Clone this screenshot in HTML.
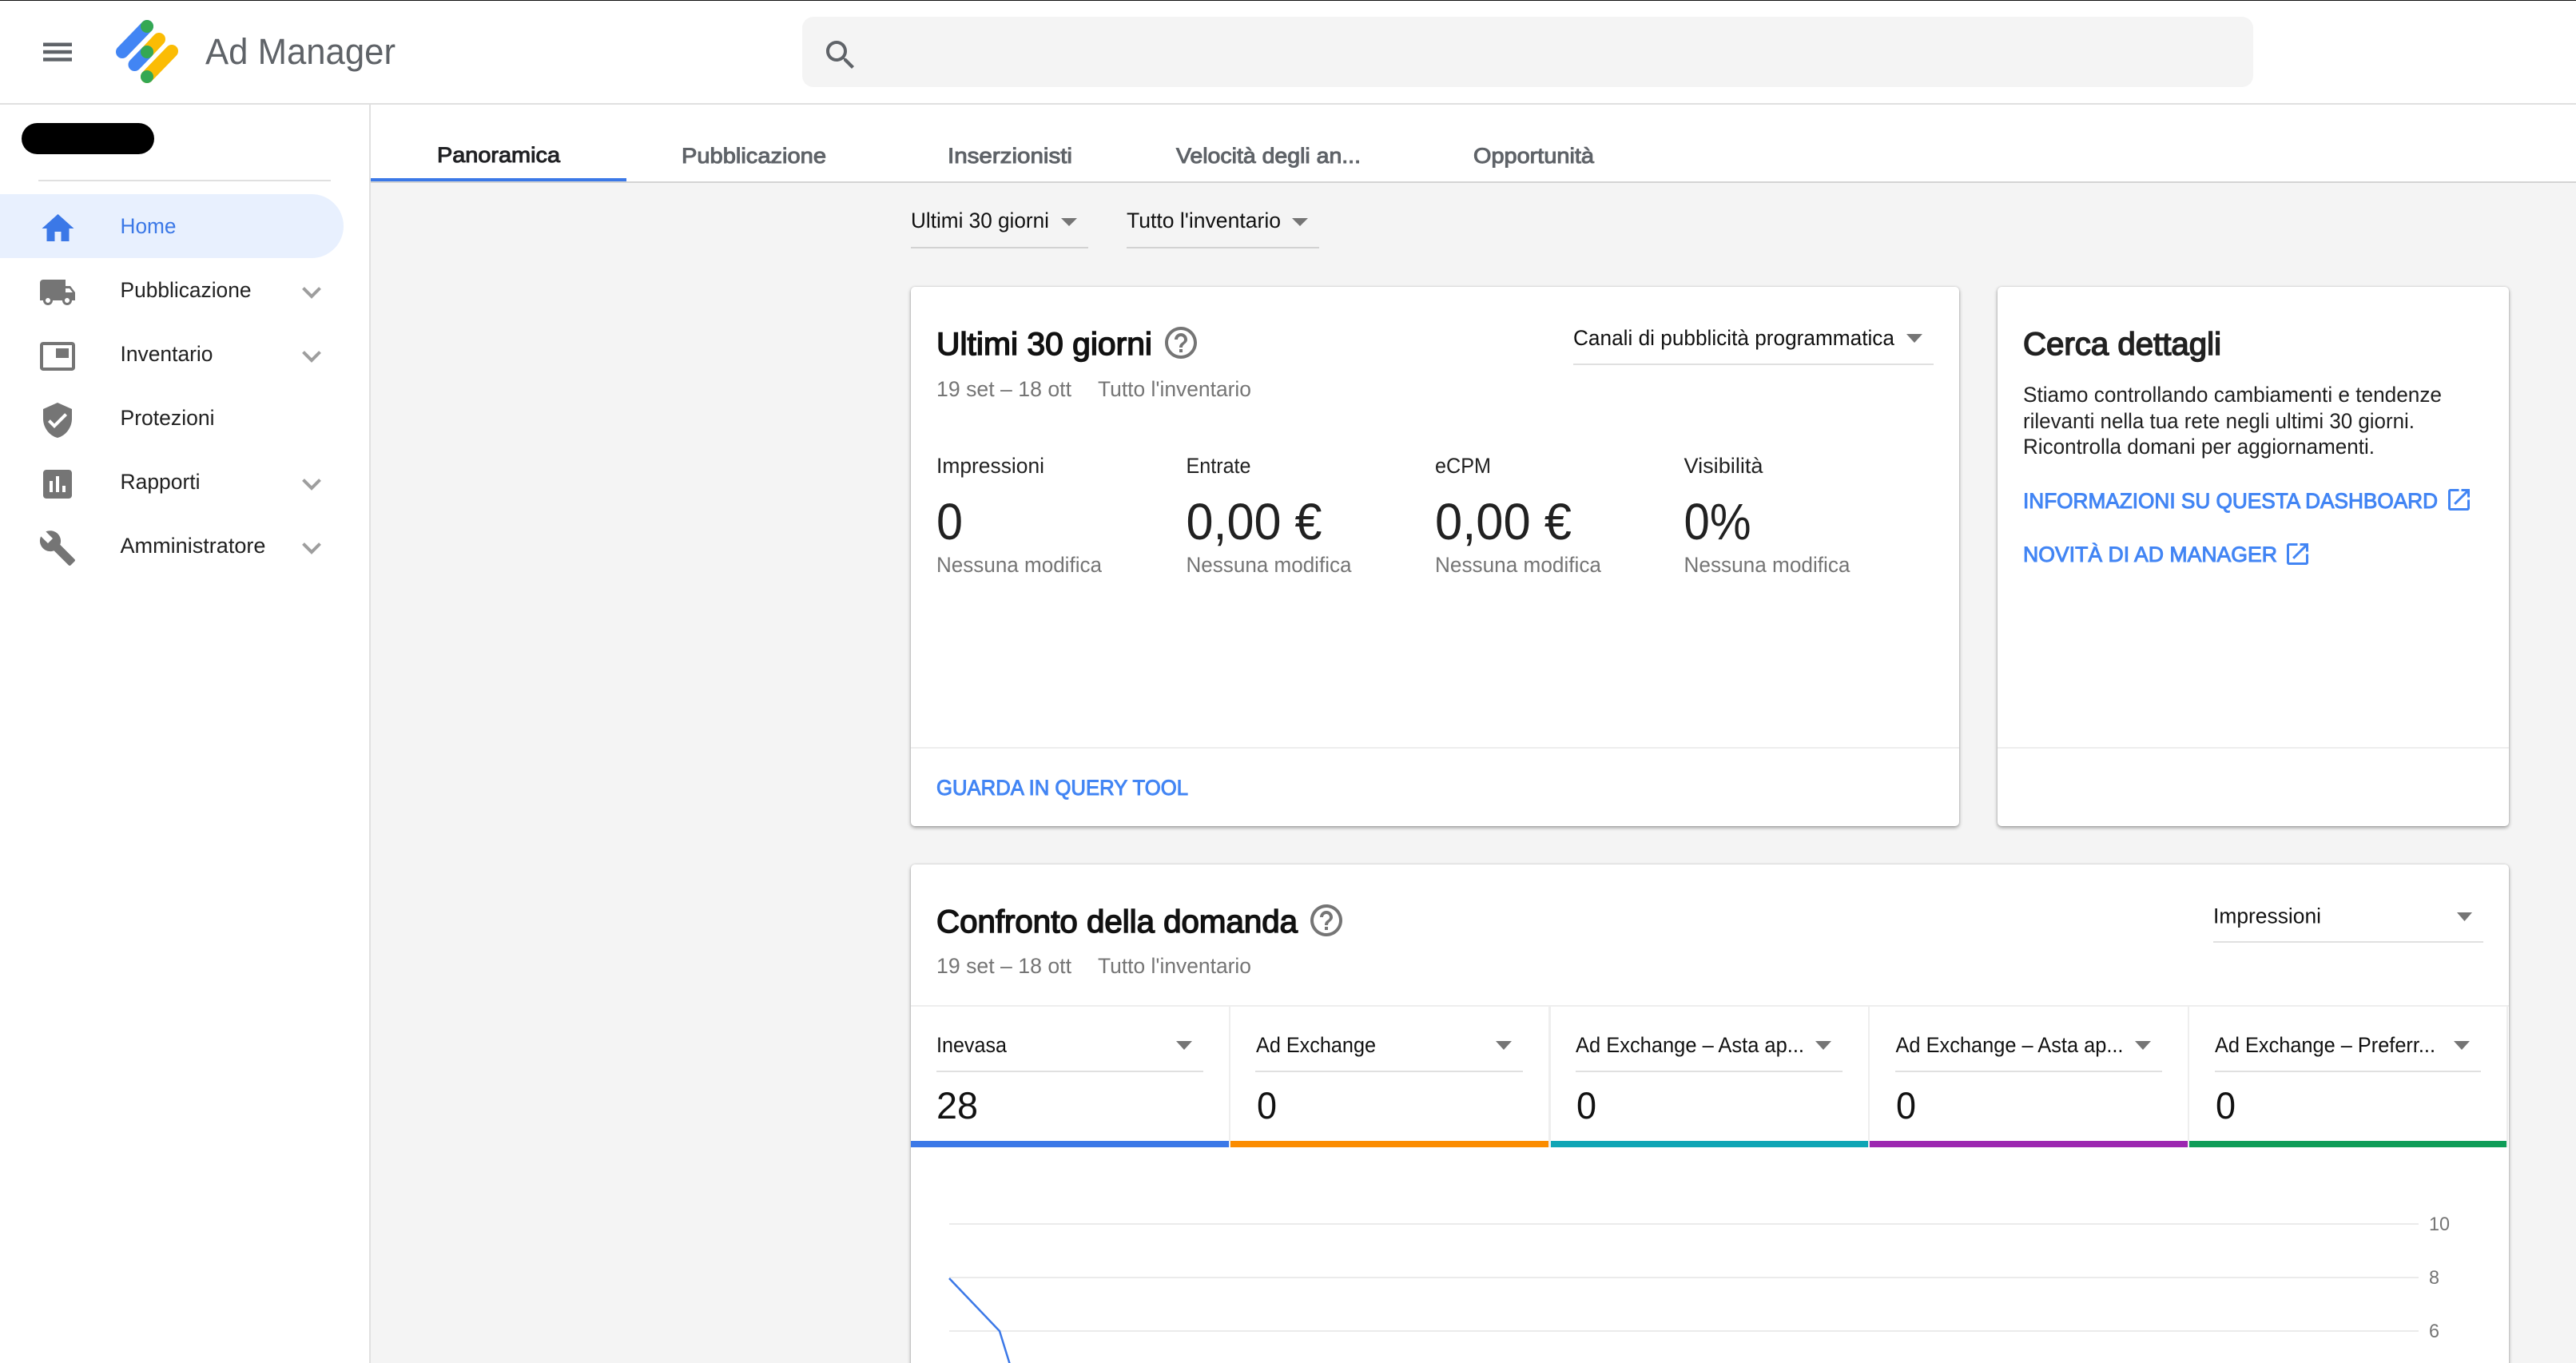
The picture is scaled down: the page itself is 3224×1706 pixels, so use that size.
<!DOCTYPE html>
<html lang="it">
<head>
<meta charset="utf-8">
<title>Ad Manager</title>
<style>
html,body{margin:0;padding:0;width:3224px;height:1706px;overflow:hidden;background:#fff}
body{position:relative;font-family:"Liberation Sans",Arial,sans-serif}
.box{position:absolute}
.card{position:absolute;background:#fff;border-radius:5px;box-shadow:0 2px 5px rgba(0,0,0,.36),0 0 2px rgba(0,0,0,.14)}
svg{position:absolute;left:0;top:0}
text{font-family:"Liberation Sans",Arial,sans-serif;font-size:26.5px;fill:#212121}
.m{stroke-width:1px;paint-order:stroke}
.tab{font-size:27px;fill:#5f6368;stroke:#5f6368}
.gr{fill:#757575}
.bk{fill:#111}
.t{font-size:40px;fill:#111;stroke:#111;stroke-width:1.500px;paint-order:stroke}
.lnk{font-size:27px;fill:#4285f4;stroke:#4285f4}
.big{font-size:64px;fill:#212121}
.val{font-size:47px;fill:#111}
.ax{font-size:24px;fill:#757575}
.nav{font-size:26.5px;fill:#212121}
.ic{fill:#757575}
</style>
</head>
<body>
<div class="box" style="left:0;top:0;width:3224px;height:1px;background:#111"></div>
<div class="box" style="left:0;top:129px;width:3224px;height:2px;background:#e0e0e0"></div>
<div class="box" style="left:1004px;top:21px;width:1816px;height:88px;background:#f4f4f4;border-radius:14px"></div>

<div class="box" style="left:0;top:131px;width:462px;height:1575px;background:#fff"></div>
<div class="box" style="left:462px;top:131px;width:2px;height:1575px;background:#e0e0e0"></div>
<div class="box" style="left:464px;top:131px;width:2760px;height:1575px;background:#f4f4f4"></div>
<div class="box" style="left:464px;top:131px;width:2760px;height:96px;background:#fff"></div>
<div class="box" style="left:464px;top:227px;width:2760px;height:2px;background:#d4d4d4"></div>
<div class="box" style="left:464px;top:223px;width:320px;height:4px;background:#3b78e7"></div>

<div class="box" style="left:27px;top:154px;width:166px;height:39px;background:#000;border-radius:20px"></div>
<div class="box" style="left:48px;top:225px;width:366px;height:2px;background:#e0e0e0"></div>
<div class="box" style="left:0;top:243px;width:430px;height:80px;background:#e8f0fe;border-radius:0 40px 40px 0"></div>

<div class="box" style="left:1140px;top:309px;width:222px;height:2px;background:#d2d2d2"></div>
<div class="box" style="left:1410px;top:309px;width:241px;height:2px;background:#d2d2d2"></div>

<div class="card" style="left:1140px;top:359px;width:1312px;height:675px"></div>
<div class="card" style="left:2500px;top:359px;width:640px;height:675px"></div>
<div class="card" style="left:1140px;top:1082px;width:2000px;height:700px"></div>

<div class="box" style="left:1140px;top:935px;width:1312px;height:2px;background:#eee"></div>
<div class="box" style="left:2500px;top:935px;width:640px;height:2px;background:#eee"></div>
<div class="box" style="left:1969px;top:455px;width:451px;height:2px;background:#e0e0e0"></div>
<div class="box" style="left:2770px;top:1178px;width:338px;height:2px;background:#e0e0e0"></div>

<div class="box" style="left:1140px;top:1258px;width:2000px;height:2px;background:#eee"></div>
<div class="box" style="left:1538px;top:1260px;width:2px;height:176px;background:#eee"></div>
<div class="box" style="left:1938px;top:1260px;width:3px;height:176px;background:#eee"></div>
<div class="box" style="left:2338px;top:1260px;width:2px;height:176px;background:#eee"></div>
<div class="box" style="left:2738px;top:1260px;width:2px;height:176px;background:#eee"></div>
<div class="box" style="left:3137px;top:1260px;width:2px;height:176px;background:#eee"></div>

<div class="box" style="left:1172px;top:1340px;width:334px;height:2px;background:#e0e0e0"></div>
<div class="box" style="left:1571px;top:1340px;width:335px;height:2px;background:#e0e0e0"></div>
<div class="box" style="left:1972px;top:1340px;width:334px;height:2px;background:#e0e0e0"></div>
<div class="box" style="left:2372px;top:1340px;width:334px;height:2px;background:#e0e0e0"></div>
<div class="box" style="left:2772px;top:1340px;width:333px;height:2px;background:#e0e0e0"></div>

<div class="box" style="left:1140px;top:1428px;width:398px;height:8px;background:#3b78e7"></div>
<div class="box" style="left:1540px;top:1428px;width:398px;height:8px;background:#fb8c00"></div>
<div class="box" style="left:1941px;top:1428px;width:397px;height:8px;background:#0fa5b5"></div>
<div class="box" style="left:2340px;top:1428px;width:398px;height:8px;background:#9c27b0"></div>
<div class="box" style="left:2740px;top:1428px;width:397px;height:8px;background:#0f9d58"></div>

<div class="box" style="left:1188px;top:1531px;width:1839px;height:2px;background:#ebebeb"></div>
<div class="box" style="left:1188px;top:1598px;width:1839px;height:2px;background:#ebebeb"></div>
<div class="box" style="left:1188px;top:1665px;width:1839px;height:2px;background:#ebebeb"></div>

<svg width="3224" height="1706" viewBox="0 0 3224 1706" xmlns="http://www.w3.org/2000/svg">
  <!-- hamburger -->
  <g fill="#5f6368"><rect x="54" y="53.500" width="36" height="4.500"/><rect x="54" y="62.800" width="36" height="4.500"/><rect x="54" y="72.200" width="36" height="4.500"/></g>
  <!-- logo -->
  <g fill="none" stroke-width="16" stroke-linecap="round">
    <line x1="184" y1="33" x2="153" y2="65" stroke="#4285f4"/>
    <line x1="199" y1="49" x2="184" y2="65" stroke="#fbbc04"/>
    <line x1="184" y1="65" x2="168.500" y2="81" stroke="#4285f4"/>
    <line x1="215" y1="64" x2="184" y2="96" stroke="#fbbc04"/>
  </g>
  <g fill="#34a853"><circle cx="184" cy="33" r="8"/><circle cx="184" cy="65" r="8"/><circle cx="184" cy="96" r="8"/></g>
  <text x="257" y="80" style="font-size:45px;fill:#5f6368" textLength="238" lengthAdjust="spacingAndGlyphs">Ad Manager</text>
  <!-- search -->
  <path transform="translate(1028 45) scale(2)" fill="#5f6368" d="M15.500 14h-.79l-.28-.27C15.410 12.590 16 11.110 16 9.500 16 5.910 13.090 3 9.500 3S3 5.910 3 9.500 5.910 16 9.500 16c1.610 0 3.090-.59 4.230-1.570l.27.28v.79l5 4.990L20.490 19l-4.990-5zm-6 0C7.010 14 5 11.990 5 9.500S7.010 5 9.500 5 14 7.010 14 9.500 11.990 14 9.500 14z"/>

  <!-- side nav -->
  <path transform="translate(48.500 262) scale(2)" fill="#3b78e7" d="M10 20v-6h4v6h5v-8h3L12 3 2 12h3v8z"/>
  <text class="nav" x="150.500" y="292" style="fill:#3b78e7" textLength="70" lengthAdjust="spacingAndGlyphs">Home</text>
  <path class="ic" transform="translate(48 342) scale(2)" d="M20 8h-3V4H3c-1.100 0-2 .9-2 2v11h2c0 1.660 1.340 3 3 3s3-1.340 3-3h6c0 1.660 1.340 3 3 3s3-1.340 3-3h2v-5l-3-4zM6 18.500c-.83 0-1.500-.67-1.500-1.500s.67-1.500 1.500-1.500 1.500.67 1.500 1.500-.67 1.500-1.500 1.500zm13.500-9l1.960 2.500H17V9.500h2.500zm-1.500 9c-.83 0-1.500-.67-1.500-1.500s.67-1.500 1.500-1.500 1.500.67 1.500 1.500-.67 1.500-1.500 1.500z"/>
  <text class="nav" x="150.500" y="372" textLength="164" lengthAdjust="spacingAndGlyphs">Pubblicazione</text>
  <path class="ic" transform="translate(48 422) scale(2)" d="M19 7h-8v6h8V7zm2-4H3c-1.100 0-2 .9-2 2v14c0 1.100.9 1.980 2 1.980h18c1.100 0 2-.88 2-1.980V5c0-1.100-.9-2-2-2zm0 16.010H3V4.980h18v14.030z"/>
  <text class="nav" x="150.500" y="452" textLength="116" lengthAdjust="spacingAndGlyphs">Inventario</text>
  <path class="ic" transform="translate(48 502) scale(2)" d="M12 1L3 5v6c0 5.550 3.840 10.740 9 12 5.160-1.260 9-6.450 9-12V5l-9-4zm-2 16l-4-4 1.410-1.410L10 14.170l6.590-6.590L18 9l-8 8z"/>
  <text class="nav" x="150.500" y="532" textLength="118" lengthAdjust="spacingAndGlyphs">Protezioni</text>
  <path class="ic" transform="translate(48 582) scale(2)" d="M19 3H5c-1.100 0-2 .9-2 2v14c0 1.100.9 2 2 2h14c1.100 0 2-.9 2-2V5c0-1.100-.9-2-2-2zM9 17H7v-7h2v7zm4 0h-2V7h2v10zm4 0h-2v-4h2v4z"/>
  <text class="nav" x="150.500" y="612" textLength="100" lengthAdjust="spacingAndGlyphs">Rapporti</text>
  <path class="ic" transform="translate(48 662) scale(2)" d="M22.700 19l-9.100-9.100c.9-2.300.4-5-1.500-6.900-2-2-5-2.400-7.400-1.300L9 6 6 9 1.600 4.700C.4 7.100.9 10.100 2.900 12.100c1.900 1.900 4.600 2.400 6.900 1.500l9.100 9.100c.4.4 1 .4 1.400 0l2.300-2.300c.5-.4.5-1.100.1-1.400z"/>
  <text class="nav" x="150.500" y="692" textLength="182" lengthAdjust="spacingAndGlyphs">Amministratore</text>
  <g fill="none" stroke="#9e9e9e" stroke-width="4">
    <path d="M379.500 360.500L390 371l10.500-10.500"/>
    <path d="M379.500 440.500L390 451l10.500-10.500"/>
    <path d="M379.500 600.500L390 611l10.500-10.500"/>
    <path d="M379.500 680.500L390 691l10.500-10.500"/>
  </g>

  <!-- tabs -->
  <text class="m tab" x="547" y="203" style="fill:#202124;stroke:#202124" textLength="154" lengthAdjust="spacingAndGlyphs">Panoramica</text>
  <text class="m tab" x="853" y="204" textLength="181" lengthAdjust="spacingAndGlyphs">Pubblicazione</text>
  <text class="m tab" x="1186" y="204" textLength="156" lengthAdjust="spacingAndGlyphs">Inserzionisti</text>
  <text class="m tab" x="1472" y="204" textLength="231" lengthAdjust="spacingAndGlyphs">Velocità degli an...</text>
  <text class="m tab" x="1844" y="204" textLength="151" lengthAdjust="spacingAndGlyphs">Opportunità</text>

  <!-- filters -->
  <text class="bk" x="1140" y="285" textLength="173" lengthAdjust="spacingAndGlyphs">Ultimi 30 giorni</text>
  <polygon class="ic" points="1328,273 1348,273 1338,283"/>
  <text class="bk" x="1410" y="285" textLength="193" lengthAdjust="spacingAndGlyphs">Tutto l'inventario</text>
  <polygon class="ic" points="1617,273 1637,273 1627,283"/>

  <!-- card 1 -->
  <text class="t" x="1172" y="444" textLength="270" lengthAdjust="spacingAndGlyphs">Ultimi 30 giorni</text>
  <path class="ic" transform="translate(1454 405) scale(2)" d="M11 18h2v-2h-2v2zm1-16C6.480 2 2 6.480 2 12s4.480 10 10 10 10-4.480 10-10S17.520 2 12 2zm0 18c-4.410 0-8-3.590-8-8s3.590-8 8-8 8 3.590 8 8-3.590 8-8 8zm0-14c-2.210 0-4 1.790-4 4h2c0-1.100.9-2 2-2s2 .9 2 2c0 2-3 1.750-3 5h2c0-2.250 3-2.500 3-5 0-2.210-1.790-4-4-4z"/>
  <text class="gr" x="1172" y="496" textLength="169" lengthAdjust="spacingAndGlyphs">19 set – 18 ott</text>
  <text class="gr" x="1374" y="496" textLength="192" lengthAdjust="spacingAndGlyphs">Tutto l'inventario</text>
  <text class="bk" x="1969" y="432" textLength="402" lengthAdjust="spacingAndGlyphs">Canali di pubblicità programmatica</text>
  <polygon class="ic" points="2386,418 2406,418 2396,429"/>

  <text x="1172" y="592" textLength="135" lengthAdjust="spacingAndGlyphs">Impressioni</text>
  <text x="1484.500" y="592" textLength="81" lengthAdjust="spacingAndGlyphs">Entrate</text>
  <text x="1796" y="592" textLength="70" lengthAdjust="spacingAndGlyphs">eCPM</text>
  <text x="2107.500" y="592" textLength="99" lengthAdjust="spacingAndGlyphs">Visibilità</text>

  <text class="big" x="1172" y="675" textLength="33" lengthAdjust="spacingAndGlyphs">0</text>
  <text class="big" x="1484.500" y="675" textLength="170" lengthAdjust="spacingAndGlyphs">0,00 €</text>
  <text class="big" x="1796" y="675" textLength="171" lengthAdjust="spacingAndGlyphs">0,00 €</text>
  <text class="big" x="2107.500" y="675" textLength="84" lengthAdjust="spacingAndGlyphs">0%</text>

  <text class="gr" x="1172" y="716" textLength="207" lengthAdjust="spacingAndGlyphs">Nessuna modifica</text>
  <text class="gr" x="1484.500" y="716" textLength="207" lengthAdjust="spacingAndGlyphs">Nessuna modifica</text>
  <text class="gr" x="1796" y="716" textLength="208" lengthAdjust="spacingAndGlyphs">Nessuna modifica</text>
  <text class="gr" x="2107.500" y="716" textLength="208" lengthAdjust="spacingAndGlyphs">Nessuna modifica</text>

  <text class="m lnk" x="1172" y="995" textLength="315" lengthAdjust="spacingAndGlyphs">GUARDA IN QUERY TOOL</text>

  <!-- card 2 -->
  <text class="t" x="2532" y="444" style="fill:#212121;stroke:#212121" textLength="248" lengthAdjust="spacingAndGlyphs">Cerca dettagli</text>
  <text x="2532" y="503" textLength="524" lengthAdjust="spacingAndGlyphs">Stiamo controllando cambiamenti e tendenze</text>
  <text x="2532" y="536" textLength="490" lengthAdjust="spacingAndGlyphs">rilevanti nella tua rete negli ultimi 30 giorni.</text>
  <text x="2532" y="568" textLength="440" lengthAdjust="spacingAndGlyphs">Ricontrolla domani per aggiornamenti.</text>
  <text class="m lnk" x="2532" y="636" textLength="519" lengthAdjust="spacingAndGlyphs">INFORMAZIONI SU QUESTA DASHBOARD</text>
  <path fill="#4285f4" transform="translate(3059.500 607.500) scale(1.500)" d="M19 19H5V5h7V3H5c-1.110 0-2 .9-2 2v14c0 1.100.89 2 2 2h14c1.100 0 2-.9 2-2v-7h-2v7zM14 3v2h3.590l-9.830 9.830 1.410 1.410L19 6.410V10h2V3h-7z"/>
  <text class="m lnk" x="2532" y="703" textLength="318" lengthAdjust="spacingAndGlyphs">NOVITÀ DI AD MANAGER</text>
  <path fill="#4285f4" transform="translate(2857.500 675.500) scale(1.500)" d="M19 19H5V5h7V3H5c-1.110 0-2 .9-2 2v14c0 1.100.89 2 2 2h14c1.100 0 2-.9 2-2v-7h-2v7zM14 3v2h3.590l-9.830 9.830 1.410 1.410L19 6.410V10h2V3h-7z"/>

  <!-- card 3 -->
  <text class="t" x="1172" y="1167" textLength="452" lengthAdjust="spacingAndGlyphs">Confronto della domanda</text>
  <path class="ic" transform="translate(1636 1128) scale(2)" d="M11 18h2v-2h-2v2zm1-16C6.480 2 2 6.480 2 12s4.480 10 10 10 10-4.480 10-10S17.520 2 12 2zm0 18c-4.410 0-8-3.590-8-8s3.590-8 8-8 8 3.590 8 8-3.590 8-8 8zm0-14c-2.210 0-4 1.790-4 4h2c0-1.100.9-2 2-2s2 .9 2 2c0 2-3 1.750-3 5h2c0-2.250 3-2.500 3-5 0-2.210-1.790-4-4-4z"/>
  <text class="gr" x="1172" y="1218" textLength="169" lengthAdjust="spacingAndGlyphs">19 set – 18 ott</text>
  <text class="gr" x="1374" y="1218" textLength="192" lengthAdjust="spacingAndGlyphs">Tutto l'inventario</text>
  <text class="bk" x="2770" y="1155.500" textLength="135" lengthAdjust="spacingAndGlyphs">Impressioni</text>
  <polygon class="ic" points="3075,1142 3094,1142 3084.500,1153"/>

  <text class="bk" x="1172" y="1317" textLength="88" lengthAdjust="spacingAndGlyphs">Inevasa</text>
  <text class="bk" x="1572" y="1317" textLength="150" lengthAdjust="spacingAndGlyphs">Ad Exchange</text>
  <text class="bk" x="1972" y="1317" textLength="286" lengthAdjust="spacingAndGlyphs">Ad Exchange – Asta ap...</text>
  <text class="bk" x="2372.500" y="1317" textLength="285" lengthAdjust="spacingAndGlyphs">Ad Exchange – Asta ap...</text>
  <text class="bk" x="2772" y="1317" textLength="276" lengthAdjust="spacingAndGlyphs">Ad Exchange – Preferr...</text>
  <g class="ic">
    <polygon points="1472,1303 1492,1303 1482,1314"/>
    <polygon points="1872,1303 1892,1303 1882,1314"/>
    <polygon points="2272,1303 2292,1303 2282,1314"/>
    <polygon points="2672,1303 2692,1303 2682,1314"/>
    <polygon points="3071,1303 3091,1303 3081,1314"/>
  </g>
  <text class="val" x="1172" y="1400" textLength="52" lengthAdjust="spacingAndGlyphs">28</text>
  <text class="val" x="1573" y="1400" textLength="25" lengthAdjust="spacingAndGlyphs">0</text>
  <text class="val" x="1973" y="1400" textLength="25" lengthAdjust="spacingAndGlyphs">0</text>
  <text class="val" x="2373" y="1400" textLength="25" lengthAdjust="spacingAndGlyphs">0</text>
  <text class="val" x="2773" y="1400" textLength="25" lengthAdjust="spacingAndGlyphs">0</text>

  <!-- chart -->
  <polyline fill="none" stroke="#3b78e7" stroke-width="2.500" points="1188,1600 1251,1666 1264,1708"/>
  <text class="ax" x="3040" y="1540" textLength="26" lengthAdjust="spacingAndGlyphs">10</text>
  <text class="ax" x="3040" y="1607" textLength="13" lengthAdjust="spacingAndGlyphs">8</text>
  <text class="ax" x="3040" y="1674" textLength="13" lengthAdjust="spacingAndGlyphs">6</text>
</svg>
</body>
</html>
